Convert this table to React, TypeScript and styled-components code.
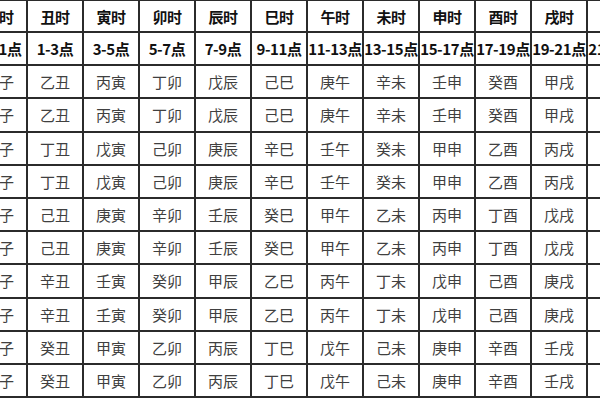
import React from 'react';
import styled, { createGlobalStyle } from 'styled-components';

const GlobalStyle = createGlobalStyle`
  html, body {
    margin: 0;
    padding: 0;
    width: 600px;
    height: 400px;
    overflow: hidden;
    background: #ffffff;
  }
`;

const Page = styled.div`
  width: 600px;
  height: 400px;
  overflow: hidden;
  background: #ffffff;
`;

const Table = styled.div`
  display: grid;
  grid-template-columns: repeat(12, 54px);
  grid-template-rows: 30px repeat(11, 31.2px);
  gap: 2px;
  padding: 2px;
  margin: -1px 0 0 -30px;
  width: max-content;
  background: #2b2b2b;
  font-family: "Noto Sans CJK SC", "Noto Sans", sans-serif;
`;

const Cell = styled.div<{ $head?: boolean }>`
  display: flex;
  align-items: center;
  justify-content: center;
  background: #ffffff;
  white-space: nowrap;
  font-size: ${({ $head }) => ($head ? '15px' : '15px')};
  font-weight: ${({ $head }) => ($head ? 700 : 400)};
  color: ${({ $head }) => ($head ? '#111111' : '#404040')};
  letter-spacing: ${({ $head }) => ($head ? '-0.4px' : '0')};
`;

const BRANCHES = ['子', '丑', '寅', '卯', '辰', '巳', '午', '未', '申', '酉', '戌', '亥'];
const STEMS = ['甲', '乙', '丙', '丁', '戊', '己', '庚', '辛', '壬', '癸'];
const HOURS = ['23-1点', '1-3点', '3-5点', '5-7点', '7-9点', '9-11点', '11-13点', '13-15点', '15-17点', '17-19点', '19-21点', '21-23点'];

// 五鼠遁: each day-stem pair starts 子 hour from 甲, 丙, 戊, 庚, 壬 — shown twice
const START_STEMS = [0, 0, 2, 2, 4, 4, 6, 6, 8, 8];

const App = () => {
  return (
    <Page>
      <GlobalStyle />
      <Table>
        {BRANCHES.map((b) => (
          <Cell $head key={`h-${b}`}>{b}时</Cell>
        ))}
        {HOURS.map((h) => (
          <Cell $head key={`t-${h}`}>{h}</Cell>
        ))}
        {START_STEMS.map((start, row) =>
          BRANCHES.map((b, i) => (
            <Cell key={`${row}-${b}`}>{STEMS[(start + i) % 10]}{b}</Cell>
          ))
        )}
      </Table>
    </Page>
  );
};

export default App;
